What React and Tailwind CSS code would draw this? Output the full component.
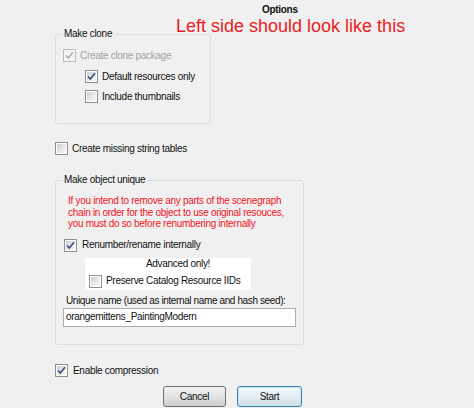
import React from "react";

const Check = ({ checked, disabled }) => (
  <span
    className={`relative flex h-[13px] w-[13px] shrink-0 border p-[1px] ${
      disabled ? "border-[#bcbcbc] bg-[#f4f4f4]" : "border-[#8e8f8f] bg-white"
    }`}
  >
    <span
      className={`h-full w-full ${
        disabled
          ? "bg-[#f4f4f4]"
          : "bg-linear-to-br from-[#c9cdd3] via-[#e6e7e9] to-[#f8f8f8]"
      }`}
    />
    {checked && (
      <svg
        viewBox="0 0 13 13"
        className="absolute left-[-1px] top-[-1px] h-[13px] w-[13px]"
      >
        <path
          d="M3 6.5 L5.3 9 L10 3.2"
          fill="none"
          stroke={disabled ? "#b0b0b0" : "#3b4f7d"}
          strokeWidth="1.6"
        />
      </svg>
    )}
  </span>
);

const Row = ({ checked, disabled, label, className = "" }) => (
  <div className={`flex h-[13px] items-center gap-[4px] ${className}`}>
    <Check checked={checked} disabled={disabled} />
    <span className={disabled ? "text-[#a3a3a3]" : "text-[#111]"}>{label}</span>
  </div>
);

const Group = ({ label, className = "", children }) => (
  <div className={`relative rounded-[3px] border border-[#d5dfe5] ${className}`}>
    <span className="absolute -top-[7px] left-[6px] bg-[#f0f0f0] px-[2px] leading-[12px]">
      {label}
    </span>
    {children}
  </div>
);

export default function App() {
  return (
    <div className="relative h-[408px] w-[474px] overflow-hidden bg-[#f0f0f0] font-['Liberation_Sans',Arial,sans-serif] text-[10px] leading-[12px] tracking-[-0.3px] text-[#111]">
      {/* annotation over the dialog */}
      <div className="absolute left-[176px] top-[17px] text-[18px] leading-[18px] tracking-normal text-[#ec1c24]">
        Left side should look like this
      </div>

      <div className="pl-[55px] pt-[4px]">
        <div className="pl-[207px] font-bold">Options</div>

        {/* Make clone */}
        <Group label="Make clone" className="mt-[18px] h-[90px] w-[156px]">
          <Row
            disabled
            checked
            label="Create clone package"
            className="ml-[7px] mt-[14px]"
          />
          <Row
            checked
            label="Default resources only"
            className="ml-[29px] mt-[8px]"
          />
          <Row label="Include thumbnails" className="ml-[29px] mt-[7px]" />
        </Group>

        <Row label="Create missing string tables" className="mt-[18px]" />

        {/* Make object unique */}
        <Group
          label="Make object unique"
          className="mt-[25px] h-[165px] w-[249px]"
        >
          <p className="ml-[12px] mt-[14px] leading-[11.5px] text-[#f0141e]">
            If you intend to remove any parts of the scenegraph
            <br />
            chain in order for the object to use original resouces,
            <br />
            you must do so before renumbering internally
          </p>
          <Row
            checked
            label="Renumber/rename internally"
            className="ml-[8px] mt-[9px] gap-[5px]"
          />
          <div className="ml-[29px] mt-[6px] h-[32px] w-[166px] bg-white">
            <div className="pl-[20px] text-center">Advanced only!</div>
            <Row
              label="Preserve Catalog Resource IIDs"
              className="ml-[4px] mt-[5px] gap-[3px]"
            />
          </div>
          <div className="ml-[10px] mt-[5px] tracking-[-0.38px]">
            Unique name (used as internal name and hash seed):
          </div>
          <div className="ml-[7px] mt-[1px] flex h-[19px] w-[233px] items-center border border-[#abadb3] bg-white pl-[2px]">
            orangemittens_PaintingModern
          </div>
        </Group>

        <Row checked label="Enable compression" className="mt-[19px] gap-[5px]" />

        <div className="ml-[108px] mt-[9px] flex gap-[11px]">
          <button className="flex h-[21px] w-[63px] items-center justify-center rounded-[3px] border border-[#707070] bg-linear-to-b from-[#f2f2f2] via-[#e3e3e3] to-[#cdcdcd] text-[#111]">
            Cancel
          </button>
          <button className="flex h-[21px] w-[65px] items-center justify-center rounded-[3px] border border-[#3c7fb1] bg-linear-to-b from-[#f4f9fc] via-[#e4edf3] to-[#cfdde8] text-[#111] shadow-[inset_0_0_0_1px_#c6e6f8]">
            Start
          </button>
        </div>
      </div>
    </div>
  );
}
